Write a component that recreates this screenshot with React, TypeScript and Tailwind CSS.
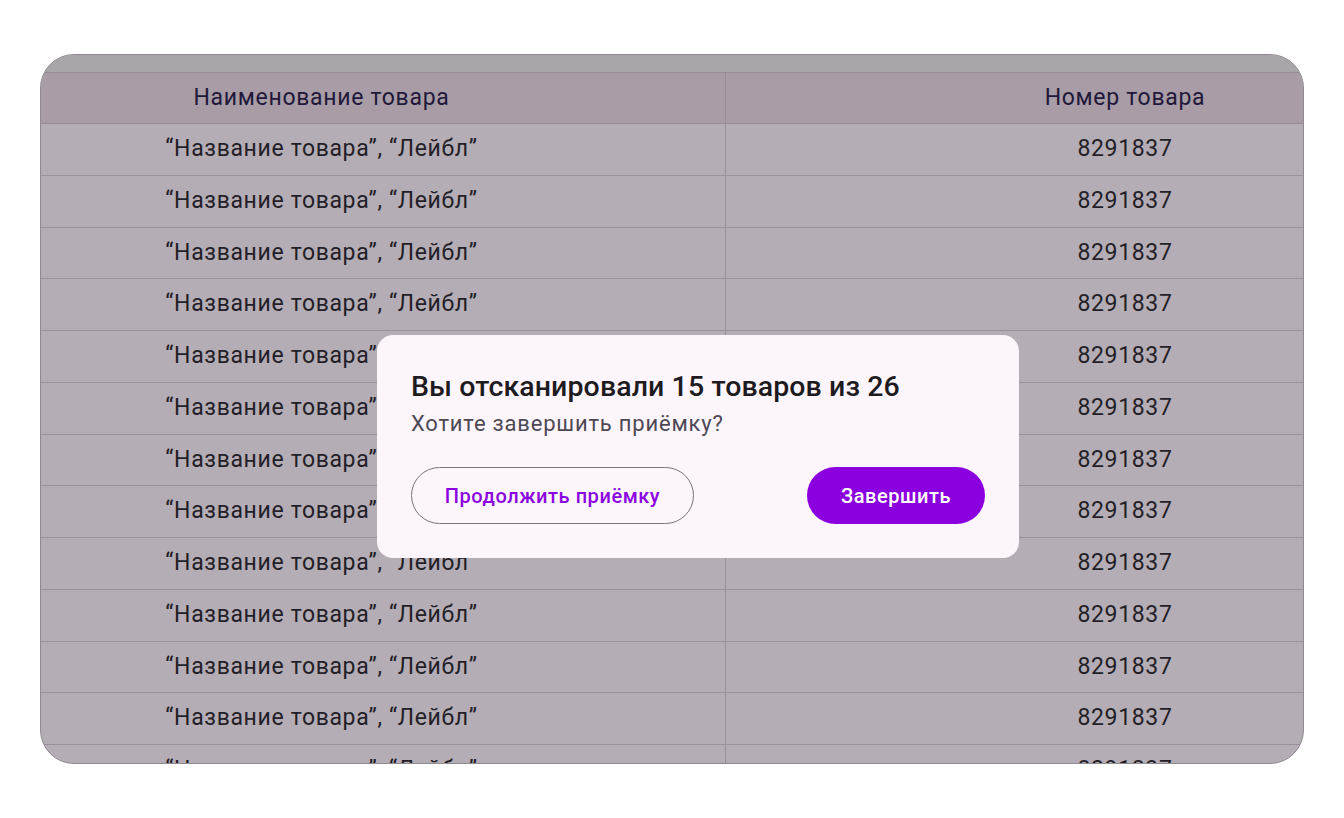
import React from "react";

const rows = Array.from({ length: 13 }, () => ({
  name: "“Название товара”, “Лейбл”",
  sku: "8291837",
}));

const font = { fontFamily: "Roboto, 'Noto Sans', sans-serif" };

const ConfirmDialog = () => (
  <div className="absolute left-[377px] top-[335px] w-[642px] h-[223px] rounded-[16px] bg-[#fdf5fc] px-[34px] pt-[34px] pb-[34px] flex flex-col">
    <h2 className="text-[28.5px] leading-[36px] font-medium text-[#1d1b20] tracking-[0.1px]">
      Вы отсканировали 15 товаров из 26
    </h2>
    <p className="mt-[4px] text-[22px] leading-[30px] text-[#4d4853] tracking-[0.8px]">
      Хотите завершить приёмку?
    </p>
    <div className="mt-auto flex items-center justify-between">
      <button className="h-[57px] w-[283px] rounded-full border border-[#79747e] text-[20px] font-medium text-[#8a05e0] tracking-[0.55px]">
        Продолжить приёмку
      </button>
      <button className="h-[57px] w-[178px] rounded-full bg-[#8b00df] text-[20px] font-medium text-white tracking-[0.55px]">
        Завершить
      </button>
    </div>
  </div>
);

export default function App() {
  return (
    <div className="relative h-[818px] w-full bg-white overflow-hidden" style={font}>
      <div className="pt-[54px] pl-[40px]">
        <div className="w-[1264px] h-[710px] rounded-[34px] overflow-hidden border border-[#8f8a8f] bg-[#b5adb5]">
          <div className="h-[18px] bg-[#aaa5aa] border-b border-[#958e95]" />
          <div className="flex h-[51px] bg-[#a89ca6] border-b border-[#958c95] text-[23px] tracking-[0.7px] text-[#22183a]">
            <div className="w-[685px] border-r border-[#968d96] flex items-center justify-center pr-[123px]">
              Наименование товара
            </div>
            <div className="flex-1 flex items-center justify-center pl-[221px]">
              Номер товара
            </div>
          </div>
          {rows.map((row, i) => (
            <div
              key={i}
              className="flex h-[51.75px] border-b border-[#9a929a] text-[23px] tracking-[0.65px] text-[#231e27]"
            >
              <div className="w-[685px] border-r border-[#978f98] flex items-center justify-center pr-[123px]">
                {row.name}
              </div>
              <div className="flex-1 flex items-center justify-center pl-[221px]">
                {row.sku}
              </div>
            </div>
          ))}
        </div>
      </div>
      <ConfirmDialog />
    </div>
  );
}
